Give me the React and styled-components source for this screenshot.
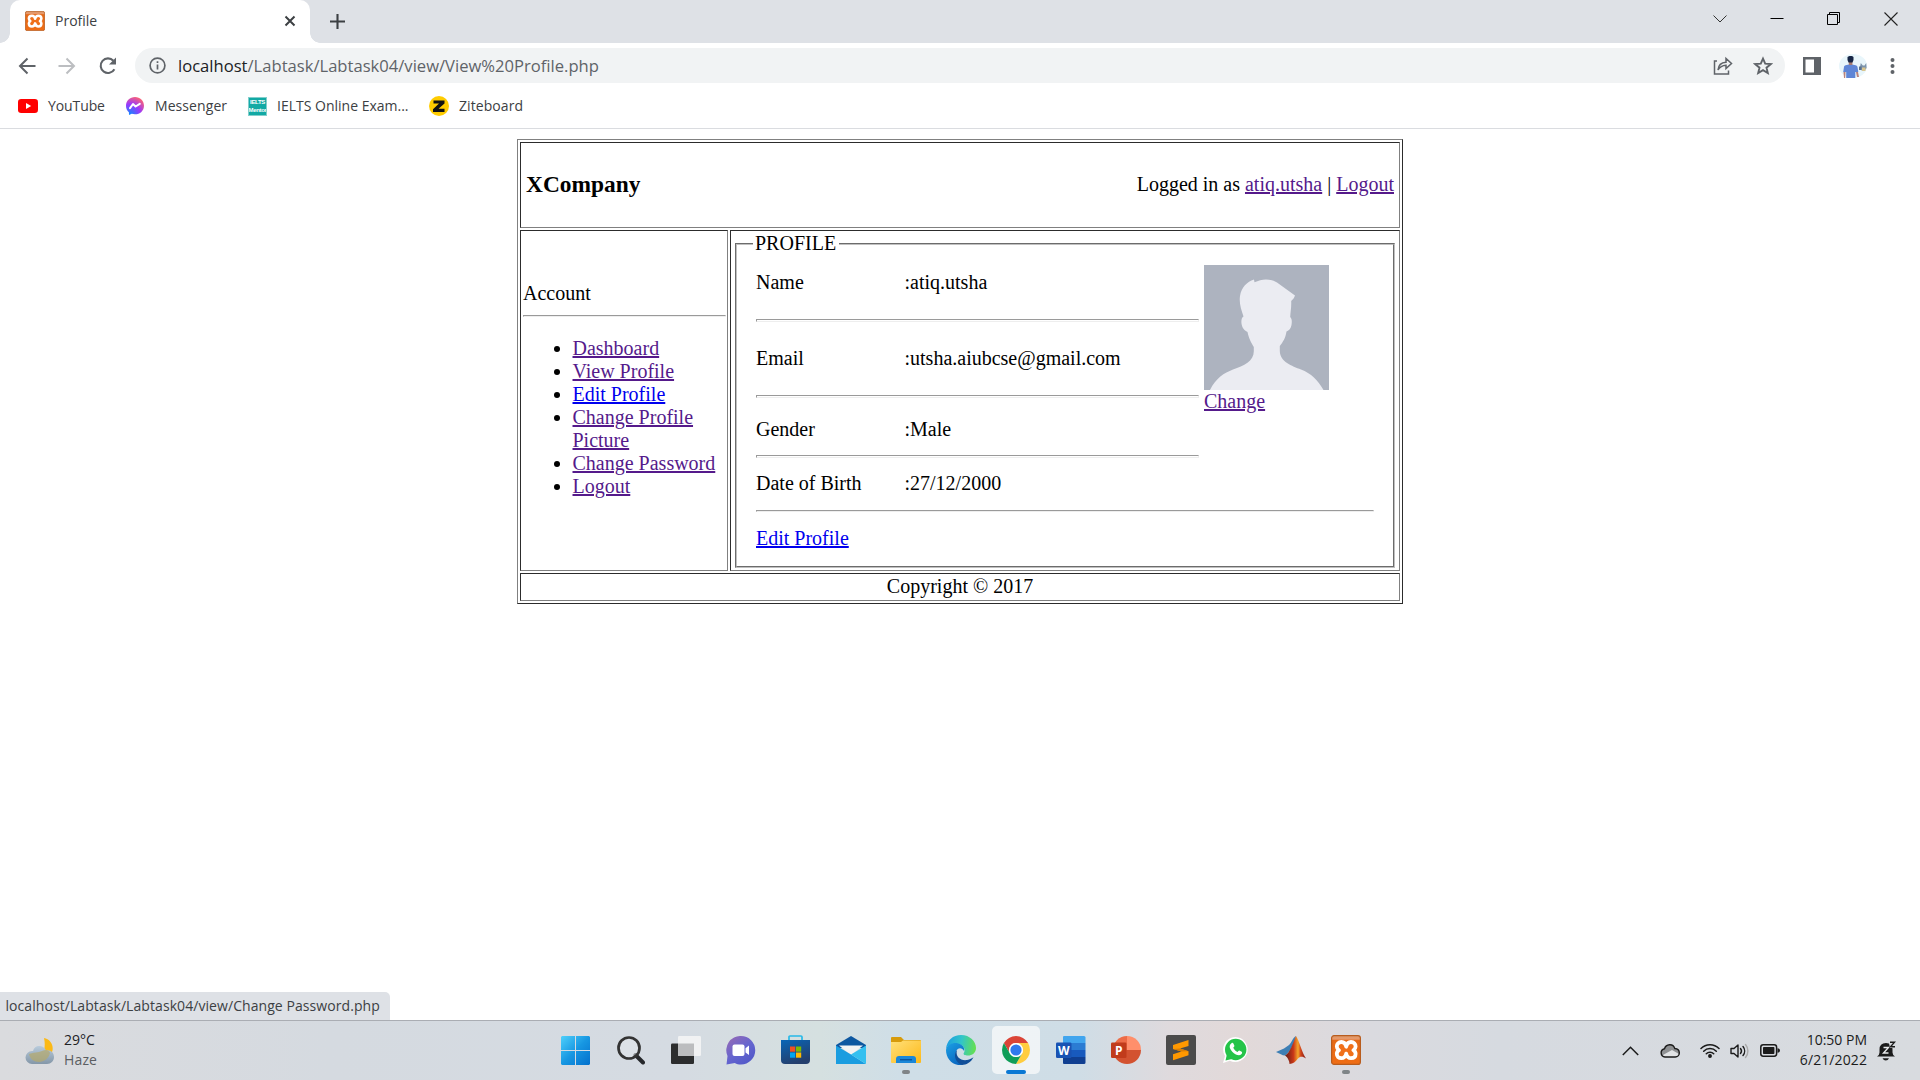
import React from "react";
import styled, { createGlobalStyle } from "styled-components";

const Global = createGlobalStyle`
  html, body { margin: 0; padding: 0; background: #fff; }
  body { overflow: hidden; }
  * { box-sizing: border-box; }
  svg { display: block; flex: none; }
`;

const ui = `"Open Sans", "Noto Sans", sans-serif`;

const Screen = styled.div`
  width: 1920px;
  height: 1080px;
  display: flex;
  flex-direction: column;
  background: #fff;
`;

/* ---------- browser chrome ---------- */
const TabStrip = styled.header`
  height: 43px;
  flex: none;
  display: flex;
  align-items: flex-end;
  background: #dee1e6;
`;
const TabFoot = styled.span`
  width: 10px;
  height: 10px;
  background: radial-gradient(circle at ${(p) => (p.$right ? "100% 0" : "0 0")}, #dee1e6 9.5px, #fff 10px);
`;
const Tab = styled.div`
  width: 300px;
  height: 43px;
  padding: 0 14px 2px 15px;
  display: flex;
  align-items: center;
  background: #fff;
  border-radius: 10px 10px 0 0;
`;
const Label = styled.span`
  font: ${(p) => p.$size || 14}px/1.2 ${ui};
  letter-spacing: ${(p) => p.$track || 0}px;
  color: ${(p) => p.$color || "#3c4043"};
  white-space: pre;
`;
const TabTitle = styled(Label)`
  flex: 1;
  padding: 1px 0 0 10px;
`;
const NewTab = styled.div`
  height: 43px;
  padding-left: 10px;
  flex: 1;
  display: flex;
  align-items: center;
`;
const WindowControls = styled.div`
  height: 37px;
  display: flex;
  align-items: center;
  align-self: flex-start;
  gap: 43px;
  padding-right: 22px;
`;
const Toolbar = styled.div`
  height: 45px;
  flex: none;
  display: flex;
  align-items: center;
  padding: 0 21px 0 18px;
`;
const NavButtons = styled.div`
  display: flex;
  align-items: center;
  gap: 22px;
  width: 117px;
`;
const UrlBar = styled.div`
  width: 1650px;
  height: 35px;
  border-radius: 18px;
  background: #f1f3f4;
  display: flex;
  align-items: center;
  padding: 0 12px 0 14px;
`;
const Url = styled(Label)`
  flex: 1;
  padding-left: 12px;
  b { font-weight: 400; color: #202124; }
`;
const UrlActions = styled.div`
  display: flex;
  gap: 20px;
`;
const ToolbarActions = styled.div`
  flex: 1;
  display: flex;
  align-items: center;
  justify-content: space-between;
  padding-left: 18px;
`;
const Bookmarks = styled.nav`
  height: 41px;
  flex: none;
  display: flex;
  align-items: center;
  padding: 0 0 4px 18px;
  border-bottom: 1px solid #dadce0;
`;
const Bookmark = styled.div`
  width: ${(p) => p.$width}px;
  display: flex;
  align-items: center;
  gap: ${(p) => p.$gap || 10}px;
`;

/* ---------- web page ---------- */
const dark = "#2c2c2c";
const grey = "#808080";

const Page = styled.main`
  flex: 1;
  padding-top: 10px;
  display: flex;
  flex-direction: column;
  align-items: center;
  font: 20px/23px "Liberation Serif", "Times New Roman", serif;
  color: #000;
`;
const Frame = styled.div`
  width: 886px;
  height: 465px;
  padding: 2px;
  display: grid;
  grid-template-columns: 208px 670px;
  grid-template-rows: 86px 341px 28px;
  gap: 2px;
  border: 1px solid;
  border-color: ${grey} ${dark} ${dark} ${grey};
`;
const Cell = styled.section`
  border: 1px solid;
  border-color: ${dark} ${grey} ${grey} ${dark};
`;
const HeaderCell = styled(Cell)`
  grid-column: 1 / -1;
  display: flex;
  align-items: center;
  justify-content: space-between;
  padding: 0 5px 2px 5px;
`;
const Company = styled.h3`
  margin: 0;
  font-size: 23.4px;
  line-height: 27px;
`;
const Link = styled.a`
  color: ${(p) => (p.$fresh ? "#0000ee" : "#551a8b")};
  text-decoration: underline;
`;
const SideCell = styled(Cell)`
  padding: 51px 1px 0 2px;
`;
const Rule = styled.div`
  height: ${(p) => p.$height || 3}px;
  margin: ${(p) => p.$margin || "0"};
  border: 1px solid;
  border-color: #9a9a9a #eee #eee #9a9a9a;
`;
const Menu = styled.ul`
  margin: 0;
  padding: 0 0 0 49.5px;
`;
const ContentCell = styled(Cell)`
  padding: 1px 4px 0;
`;
const Fieldset = styled.fieldset`
  margin: 0;
  height: 336px;
  padding: 0 16px;
  border: 2px groove #c0c0c0;
`;
const Legend = styled.legend`
  padding: 0 3px 0 2px;
`;
const Details = styled.div`
  padding: 10px 3px 0;
`;
const TopPart = styled.div`
  display: flex;
  gap: 5px;
`;
const Fields = styled.div`
  width: 443px;
  padding-top: 6px;
`;
const Field = styled.div`
  display: grid;
  grid-template-columns: 148.5px 1fr;
`;
const Photo = styled.figure`
  margin: 0;
  width: 125px;
`;
const FooterCell = styled(Cell)`
  grid-column: 1 / -1;
  text-align: center;
  padding-top: 1px;
`;

/* ---------- status bubble and taskbar ---------- */
const Status = styled.div`
  width: 390px;
  height: 28px;
  flex: none;
  padding: 1px 0 0 5.500px;
  display: flex;
  align-items: center;
  background: #dee1e6;
  border-radius: 0 5px 0 0;
`;
const Taskbar = styled.footer`
  height: 60px;
  flex: none;
  display: grid;
  grid-template-columns: 548px 826px 1fr;
  border-top: 1px solid #aaadb3;
  background: linear-gradient(90deg, #dadbde 0, #d5dae0 330px, #d5dbe2 680px, #d5e0e0 820px, #cfdee7 900px, #cfdde6 1080px, #dfdadd 1170px, #e2d9d9 1240px, #dadadf 1370px, #d6dae0 1500px, #d8dbdf 100%);
`;
const Weather = styled.div`
  display: flex;
  align-items: center;
  gap: 9px;
  padding: 0 0 0 24px;
`;
const Stack = styled.div`
  display: flex;
  flex-direction: column;
  align-items: ${(p) => (p.$end ? "flex-end" : "flex-start")};
  gap: 3px;
  padding-bottom: 1px;
`;
const Apps = styled.div`
  display: flex;
`;
const AppButton = styled.div`
  width: 55px;
  height: 59px;
  display: grid;
  place-items: center;
  position: relative;
`;
const AppFace = styled.div`
  width: 48px;
  height: 48px;
  display: grid;
  place-items: center;
  border-radius: 5px;
  background: ${(p) => (p.$active ? "rgba(246,249,250,.8)" : "none")};
  margin-top: -1px;
`;
const Marker = styled.i`
  position: absolute;
  left: 50%;
  bottom: 6px;
  width: ${(p) => (p.$active ? 20 : 8)}px;
  height: 4px;
  border-radius: 2px;
  transform: translateX(-50%);
  background: ${(p) => (p.$active ? "#0a78d4" : "#7f8487")};
`;
const Tray = styled.div`
  display: flex;
  align-items: center;
  justify-content: flex-end;
  padding-right: 24px;
`;
const TrayIcon = styled.div`
  margin-right: ${(p) => p.$gap}px;
`;
const Clock = styled(Stack)`
  width: 87px;
  margin-right: 10px;
`;

const Xampp = ({ size }) => (
  <svg width={size} height={size} viewBox="0 0 30 30">
    <defs>
      <linearGradient id="xampp" x1="0" y1="0" x2="0" y2="1">
        <stop stopColor="#dc9a6b" /><stop offset=".12" stopColor="#e8986a" /><stop offset=".17" stopColor="#e56a17" /><stop offset="1" stopColor="#ef6d15" />
      </linearGradient>
    </defs>
    <rect x=".6" y=".6" width="28.800" height="28.800" rx="2.500" fill="url(#xampp)" stroke="#b85c1e" strokeWidth="1.200" />
    <path
      d="M15.200 11.700C14.500 8.500 12.800 7 10.400 7C7.500 7 5.800 9 5.800 11.400C5.800 13.200 6.700 14.300 8 15.200C6.700 16 5.800 17.200 5.800 18.800C5.800 21.500 7.600 23.200 10.400 23.200C12.800 23.200 14.500 21.500 15.200 18.600C15.900 21.500 17.600 23.200 20 23.200C22.900 23.200 24.600 21.500 24.600 18.800C24.600 17.200 23.700 16 22.400 15.200C23.700 14.300 24.600 13.200 24.600 11.400C24.600 9 22.900 7 20 7C17.600 7 15.900 8.500 15.200 11.700Z"
      fill="#f0701a" stroke="#fff" strokeWidth="3.800" strokeLinejoin="round"
    />
  </svg>
);

const Back = ({ flip, color }) => (
  <svg width="18" height="18" viewBox="0 0 18 18" fill="none" stroke={color} strokeWidth="2" transform={flip ? "scale(-1 1)" : undefined}>
    <path d="M17.500 9H2M9.500 1.500 2 9l7.500 7.500" />
  </svg>
);
const Reload = () => (
  <svg width="20" height="20" viewBox="0 0 20 20">
    <path d="M16.400 13.200A7.300 7.300 0 1 1 15.400 4.800" fill="none" stroke="#5f6368" strokeWidth="2.100" />
    <path d="M18 1.600V8.600H11z" fill="#5f6368" />
  </svg>
);

const YouTube = () => (
  <svg width="20" height="14" viewBox="0 0 20 14">
    <rect width="20" height="14" rx="3.200" fill="#f00" />
    <path d="M8 4v6l5.200-3z" fill="#fff" />
  </svg>
);
const Messenger = () => (
  <svg width="18" height="18" viewBox="0 0 18 18">
    <defs>
      <radialGradient id="msg" cx=".2" cy="1" r="1.1">
        <stop offset="0" stopColor="#0a8bff" />
        <stop offset=".55" stopColor="#9a38fc" />
        <stop offset="1" stopColor="#ff6470" />
      </radialGradient>
    </defs>
    <path d="M9 0C3.900 0 0 3.700 0 8.700c0 2.700 1.100 5 2.900 6.500L3 18l2.700-1.200c1 .3 2.100.5 3.300.5 5.100 0 9-3.700 9-8.600S14.100 0 9 0z" fill="url(#msg)" />
    <path d="M4 11.200 7 7l2.600 2.500L13.800 6.800" fill="none" stroke="#fff" strokeWidth="2" strokeLinejoin="round" strokeLinecap="round" />
  </svg>
);
const IeltsTile = styled.span`
  width: 19px;
  height: 19px;
  background: #12a9a4;
  border: 1px solid #83cfcc;
  color: #fff;
  font: bold 6px/8px "Liberation Sans", Arial, sans-serif;
  display: flex;
  flex-direction: column;
  align-items: center;
  overflow: hidden;
  letter-spacing: -0.35px;
`;
const Zite = () => (
  <svg width="20" height="20" viewBox="0 0 20 20">
    <circle cx="10" cy="10" r="10" fill="#fc0" />
    <path d="M4.500 4.500H15.500V7.500L9.500 12.800H15.500V16H4V13.200L10 7.600H4.500z" fill="#111" />
  </svg>
);

const Silhouette = () => (
  <svg width="125" height="125" viewBox="0 0 125 125">
    <rect width="125" height="125" fill="#adb3bf" />
    <path fill="#ebecf2" d="M6 125C12 113 20 108 29 104.500C40 101 50 96 49.800 86V82C47 77 45 74 43.500 67C38 64.500 37 59 37.500 55C37.800 53 38.500 52 39.500 51.500C37 44 35 38 36 31C37.500 22 43 17 50 14.500L50.500 17.300C58 13.500 66 13.300 73 17.500C79 21.500 85 26.500 91 30.500C90 33 89 34.500 87.200 36C87.500 42 86.500 47 86.200 52C88 53.500 88 57 87.500 60C87 63.500 85 65.500 82.500 66.500C81.500 73 79 77 75.800 81V86C76 97 88 101 97 104.500C107 108.500 114 115 119.500 125z" />
  </svg>
);

const Avatar = () => (
  <svg width="28" height="24" viewBox="0 0 28 24">
    <ellipse cx="14" cy="12" rx="14" ry="12" fill="#e9f6fb" />
    <path d="M5 13c0-1.500 2.500-2.500 6.500-2.500s7 1 7 2.500l.8 5h-3v6H7.200v-6H4.200z" fill="#5f86d6" />
    <path d="M4.500 18h2l-.3 6H5zM17 18h2l1 5h-2z" fill="#b9837c" />
    <path d="M9.800 7.500h3.600v3.500H9.800z" fill="#a67a70" />
    <path d="M8.500 3c1-1.500 5.500-1.500 6 0v3l-1 2.500h-4l-1-2.500z" fill="#162545" />
    <path d="M21 13l.8-4 2 2.500h1.800l1.600-2.500.4 5-2 2.500h-3z" fill="#7d93ab" />
    <path d="M20 12.500h2.500V16H20z" fill="#59708c" /><path d="M23 13.500h3.500V17H23z" fill="#d9c58d" />
  </svg>
);

const icons = {
  windows: (
    <svg width="29" height="29" viewBox="0 0 29 29">
      <defs><linearGradient id="win" x1="0" y1="0" x2="29" y2="29" gradientUnits="userSpaceOnUse"><stop stopColor="#4fd0fb" /><stop offset=".5" stopColor="#1797e2" /><stop offset="1" stopColor="#0370cc" /></linearGradient></defs>
      <path fill="url(#win)" d="M1 0h13v14H0V1zM15 0h13l1 1v13H15zM0 15h14v14H1l-1-1zM15 15h14v13l-1 1H15z" />
    </svg>
  ),
  search: (
    <svg width="28" height="29" viewBox="0 0 28 29">
      <path d="M18.500 19 26 26.500" stroke="#26282b" strokeWidth="4" strokeLinecap="round" />
      <circle cx="12" cy="12" r="10.500" fill="#e4e7ec" fillOpacity=".5" stroke="#333" strokeWidth="2.700" />
    </svg>
  ),
  tasks: (
    <svg width="30" height="28" viewBox="0 0 30 28">
      <rect y="7.500" width="23" height="20.500" rx="1.200" fill="#2c2d2e" />
      <rect x="7" width="23" height="20" rx="1.200" fill="#f1f2f3" />
      <path d="M7 7.500h16V20H8q-1 0-1-1z" fill="#bcbdbf" />
    </svg>
  ),
  chat: (
    <svg width="30" height="29" viewBox="0 0 30 29">
      <defs><linearGradient id="chat" x1=".1" y1=".1" x2=".8" y2="1"><stop stopColor="#9069b8" /><stop offset=".5" stopColor="#6565cf" /><stop offset="1" stopColor="#5058c8" /></linearGradient></defs>
      <path fill="url(#chat)" d="M15 0a14 14 0 0 1 0 28.500c-2.500 0-4.300-.5-6.200-1.500L.5 28.500 1.500 20A14.200 14.200 0 0 1 15 0z" />
      <rect x="6.500" y="8.500" width="12" height="11.500" rx="2" fill="#fff" />
      <path d="M19.500 12.300 23 9.500v9.500L19.500 16.500z" fill="#fff" />
    </svg>
  ),
  store: (
    <svg width="29" height="30" viewBox="0 0 29 30">
      <defs><linearGradient id="store" x1="0" y1="0" x2=".4" y2="1"><stop stopColor="#0866b8" /><stop offset="1" stopColor="#243f6d" /></linearGradient></defs>
      <path d="M8 6V2q0-1 1-1h11q1 0 1 1v4" fill="none" stroke="#27b9e8" strokeWidth="1.700" />
      <path fill="url(#store)" d="M0 5h29v20q0 4-4 4H4q-4 0-4-4z" />
      <path fill="#f25022" d="M9 11.500h5.200v5.200H9z" /><path fill="#7fba00" d="M15 11.500h5.200v5.200H15z" />
      <path fill="#00a4ef" d="M9 17.500h5.200v5.200H9z" /><path fill="#ffb900" d="M15 17.500h5.200v5.200H15z" />
    </svg>
  ),
  mail: (
    <svg width="30" height="28" viewBox="0 0 30 28">
      <path fill="#0d57a0" d="M0 9 15 0l15 9v3H0z" />
      <path fill="#f3f3f3" d="M3 9.500h24L15 19z" />
      <path fill="#1a9de0" d="M0 9.500 15 18.500 30 28H0z" />
      <path fill="#35c0f0" d="M30 9.500V28L15 18.500z" />
    </svg>
  ),
  explorer: (
    <svg width="30" height="28" viewBox="0 0 30 28">
      <defs><linearGradient id="fold" x1="0" y1="0" x2="1" y2="1"><stop stopColor="#ffe07a" /><stop offset="1" stopColor="#fdb918" /></linearGradient></defs>
      <path fill="#d79b0c" d="M0 2q0-1 1-1h9l3 3h16q1 0 1 1v6H0z" />
      <path fill="url(#fold)" d="M0 6h10l2-1.500h18V26q0 1-1 1H1q-1 0-1-1z" />
      <path fill="#1a87d8" d="M5 27v-4q0-3 3-3h14q3 0 3 3v4z" />
      <rect x="9" y="23" width="12" height="1.400" fill="#0a549e" />
    </svg>
  ),
  edge: (
    <svg width="30" height="30" viewBox="0 0 30 30">
      <defs>
        <linearGradient id="e1" x1="0" y1=".4" x2="1" y2=".5"><stop stopColor="#1b9de2" /><stop offset=".5" stopColor="#32c5c9" /><stop offset="1" stopColor="#66e04f" /></linearGradient>
        <linearGradient id="e2" x1="0" y1="0" x2=".6" y2="1"><stop stopColor="#1ba0e4" /><stop offset="1" stopColor="#0a66c0" /></linearGradient>
      </defs>
      <path fill="url(#e1)" d="M0 14C1 5 7 0 15 0c9 0 15 6.500 15 13 0 5-4 7.500-8 7.500-3 0-5-1-4.300-2.300C20 15 18 10.500 13 9 7 7.200 2 10 0 14z" />
      <path fill="url(#e2)" d="M0 15C1 9.500 7 7 12.500 8.500 17 10 19 13 18 16c-2-4-7-3.500-8 1-1 5 2 10 7 13C7 31.500 0 24 0 15z" />
      <path fill="#104f99" d="M11 15c-2 7 4 11 10 10 3-.4 5-2 6.500-2.700C25 27.500 20 30 16 30c-6-2-9.500-10-5-15z" />
    </svg>
  ),
  chrome: (
    <svg width="28" height="28" viewBox="0 0 28 28">
      <path fill="#db4437" d="M1.900 7A14 14 0 0 1 26.100 7H14a7 7 0 0 0-6.100 10.500z" />
      <path fill="#ffcd40" d="M26.100 7A14 14 0 0 1 14 28l6.100-10.500A7 7 0 0 0 14 7z" />
      <path fill="#0f9d58" d="M1.900 7A14 14 0 0 0 14 28l6.100-10.500a7 7 0 0 1-12.200 0z" />
      <circle cx="14" cy="14" r="7" fill="#fff" /><circle cx="14" cy="14" r="5.600" fill="#3079ed" />
    </svg>
  ),
  sublime: (
    <svg width="30" height="30" viewBox="0 0 30 30">
      <rect width="30" height="30" rx="2" fill="#4b4b4b" />
      <path fill="#ff9800" d="M7 10 22.500 5v6L14 13.600l8.500 2.700v4L7 25.200v-6l8.500-2.700L7 14z" />
      <path fill="#d77d05" d="m7 14 8.500 2.500 7-.2L14 13.600z" />
    </svg>
  ),
  whatsapp: (
    <svg width="26" height="28" viewBox="1 0 26 28">
      <path d="M13.500 1A12.500 12.500 0 1 1 7.800 24.800L1 27l2-7A12.500 12.500 0 0 1 13.500 1z" fill="#fff" />
      <circle cx="13.700" cy="13.500" r="10.700" fill="#25c449" /><path d="M3.500 24.500 5 18l5 5z" fill="#25c449" />
      <path d="M9.500 7.200c.8-.7 1.500-.4 1.900.4l1 2.200c.2.600-.8 1.400-1.100 1.900.8 2 2.200 3.300 4.300 4.200.6-.4 1.100-1.600 1.700-1.400l2.400 1.200c.8.4.3 2-.4 2.600-1.400 1.400-3.500 1.100-5.500.1-2.700-1.300-4.800-3.600-5.800-6.100-.7-2-.2-3.800 1.500-5.100z" fill="#fff" />
    </svg>
  ),
  matlab: (
    <svg width="30" height="28" viewBox="0 0 30 28">
      <defs><linearGradient id="mat"><stop stopColor="#5f1c19" /><stop offset=".4" stopColor="#c93718" /><stop offset=".62" stopColor="#f5a52b" /><stop offset=".75" stopColor="#d2451b" /><stop offset="1" stopColor="#7c1615" /></linearGradient></defs>
      <path d="m0 16 8-3.500L13 9c2-1 4-8 7-9-1 7-6 16-11 19.500-3 0-5-2-9-3.500z" fill="#3d7fb5" />
      <path d="M20 0c3 4 6 17 10 22.500-3-2-6-2.500-8 0-2.500 3-5 5.500-8.500 5.500 0-3-2-7-4.500-8.500C14 17 17 7 20 0z" fill="url(#mat)" />
    </svg>
  ),
  xampp: <Xampp size={30} />,
};

const Brand = styled.svg`
  text { font: bold 12px "Open Sans", sans-serif; fill: #fff; text-anchor: middle; }
`;
icons.word = (
  <Brand width="30" height="28" viewBox="0 0 30 28">
    <path fill="#41a5ee" d="M8 0h20q1.500 0 1.500 1.500V7H7V1q0-1 1-1z" /><path fill="#2b7cd3" d="M7 7h22.500v7H7z" />
    <path fill="#185abd" d="M7 14h22.500v7H7z" /><path fill="#103f91" d="M7 21h22.500v5.500q0 1.500-1.500 1.500H8q-1 0-1-1z" />
    <rect y="6.500" width="15.500" height="15.500" rx="1.300" fill="#1953b3" />
    <text x="7.700" y="18.500">W</text>
  </Brand>
);
icons.powerpoint = (
  <Brand width="30" height="28" viewBox="0 0 30 28">
    <path fill="#ed6c47" d="M16 0v14H2A14 14 0 0 1 16 0z" /><path fill="#ff8f6b" d="M16 0a14 14 0 0 1 14 14H16z" />
    <path fill="#d35230" d="M2 14h28a14 14 0 0 1-28 0z" />
    <rect y="6.500" width="15.500" height="15.500" rx="1.300" fill="#c13b1b" />
    <text x="7.700" y="18.500">P</text>
  </Brand>
);

const apps = ["windows", "search", "tasks", "chat", "store", "mail", "explorer", "edge", "chrome", "word", "powerpoint", "sublime", "whatsapp", "matlab", "xampp"];
const running = ["explorer", "chrome", "xampp"];

const menu = [
  ["Dashboard"], ["View Profile"], ["Edit Profile", true], ["Change Profile Picture"], ["Change Password"], ["Logout"],
];

export default function App() {
  return (
    <Screen>
      <Global />
      <TabStrip>
        <TabFoot />
        <Tab>
          <Xampp size={20} />
          <TabTitle>Profile</TabTitle>
          <svg width="12" height="12" viewBox="0 0 12 12" stroke="#3c4043" strokeWidth="2"><path d="m1.500 1.500 9 9M10.500 1.500l-9 9" /></svg>
        </Tab>
        <TabFoot $right />
        <NewTab>
          <svg width="15" height="15" viewBox="0 0 15 15" stroke="#3c4043" strokeWidth="2.100"><path d="M7.500 0v15M0 7.500h15" /></svg>
        </NewTab>
        <WindowControls>
          <svg width="14" height="8" viewBox="0 0 14 8" fill="none" stroke="#333"><path d="m.5.5 6.500 6.500L13.500.5" /></svg>
          <svg width="14" height="14" viewBox="0 0 14 14" stroke="#000"><path d="M.5 6.500h13" /></svg>
          <svg width="14" height="14" viewBox="0 0 14 14" fill="none" stroke="#000"><path d="M.5 2.500h10v10H.5zM2.500 2.500v-2h10v10h-2" /></svg>
          <svg width="14" height="14" viewBox="0 0 14 14" stroke="#222" strokeWidth="1.100"><path d="m.5.5 13 13M13.500.5l-13 13" /></svg>
        </WindowControls>
      </TabStrip>
      <Toolbar>
        <NavButtons>
          <Back color="#5f6368" />
          <Back flip color="#bcbec1" />
          <Reload />
        </NavButtons>
        <UrlBar>
          <svg width="17" height="17" viewBox="0 0 17 17" fill="none" stroke="#5f6368" strokeWidth="1.700"><circle cx="8.500" cy="8.500" r="7.400" /><path d="M8.500 7.500v5M8.500 4.300v1.800" /></svg>
          <Url $size={16.6} $color="#5f6368"><b>localhost</b>/Labtask/Labtask04/view/View%20Profile.php</Url>
          <UrlActions>
            <svg width="20" height="20" viewBox="0 0 20 20" fill="none" stroke="#5f6368" strokeWidth="1.500"><path d="M4 5H1.500v13h14v-3.500" /><path d="M5 14c.4-5 3-7.500 8-7.800V2.500l5.500 5-5.500 5V9.200c-4 .2-6 1.300-8 4.800z" /></svg>
            <svg width="20" height="20" viewBox="0 0 20 20" fill="none" stroke="#5f6368" strokeWidth="1.900"><path d="m10 2.600 2.200 5 5.500.5-4.200 3.600 1.300 5.400-4.800-2.900-4.800 2.900 1.300-5.400-4.200-3.600 5.500-.5z" /></svg>
          </UrlActions>
        </UrlBar>
        <ToolbarActions>
          <svg width="18" height="18" viewBox="0 0 18 18"><path d="M0 0h18v18H0z" fill="#5f6368" /><path d="M2.500 2.500H11v13H2.500z" fill="#fff" /></svg>
          <Avatar />
          <svg width="14" height="18" viewBox="0 0 14 18" fill="#5f6368"><circle cx="7.500" cy="3" r="2" /><circle cx="7.500" cy="9" r="2" /><circle cx="7.500" cy="15" r="2" /></svg>
        </ToolbarActions>
      </Toolbar>
      <Bookmarks>
        <Bookmark $width={108}><YouTube /><Label $track={-0.1}>YouTube</Label></Bookmark>
        <Bookmark $width={122} $gap={11}><Messenger /><Label $track={0.08}>Messenger</Label></Bookmark>
        <Bookmark $width={181}><IeltsTile><span>IELTS</span><span>Mentor</span></IeltsTile><Label>IELTS Online Exam...</Label></Bookmark>
        <Bookmark $width={120}><Zite /><Label $track={0.08}>Ziteboard</Label></Bookmark>
      </Bookmarks>

      <Page>
        <Frame>
          <HeaderCell>
            <Company>XCompany</Company>
            <span>Logged in as <Link>atiq.utsha</Link> | <Link>Logout</Link></span>
          </HeaderCell>
          <SideCell>
            Account
            <Rule $height={2} $margin="10px 0 20px" />
            <Menu>
              {menu.map(([name, fresh]) => (
                <li key={name}><Link $fresh={fresh}>{name}</Link></li>
              ))}
            </Menu>
          </SideCell>
          <ContentCell>
            <Fieldset>
              <Legend>PROFILE</Legend>
              <Details>
                <TopPart>
                  <Fields>
                    <Field><span>Name</span><span>:atiq.utsha</span></Field>
                    <Rule $margin="25px 0" />
                    <Field><span>Email</span><span>:utsha.aiubcse@gmail.com</span></Field>
                    <Rule $margin="25px 0 20px" />
                    <Field><span>Gender</span><span>:Male</span></Field>
                    <Rule $margin="14px 0" />
                    <Field><span>Date of Birth</span><span>:27/12/2000</span></Field>
                  </Fields>
                  <Photo>
                    <Silhouette />
                    <Link>Change</Link>
                  </Photo>
                </TopPart>
                <Rule $height={2} $margin="15px 0" />
                <Link $fresh>Edit Profile</Link>
              </Details>
            </Fieldset>
          </ContentCell>
          <FooterCell>Copyright © 2017</FooterCell>
        </Frame>
      </Page>

      <Status><Label $track={0.07}>localhost/Labtask/Labtask04/view/Change Password.php</Label></Status>
      <Taskbar>
        <Weather>
          <svg width="31" height="28" viewBox="0 0 31 28">
            <defs><linearGradient id="cl" x1="0" y1="0" x2="0" y2="1"><stop stopColor="#b8cbdc" /><stop offset="1" stopColor="#8497a8" /></linearGradient></defs>
            <path d="M20 1c5 1 9 5 8.700 11-.4 7-8 11-14.700 8 6-3 8-10 6-19z" fill="#fbb917" />
            <path d="M8 27a6.500 6.500 0 0 1 0-13h1c1-4 4-5.500 7-5 3 .4 5 2 6 4.500 5-1 8 2.500 8 6.500s-3 7-7 7z" fill="url(#cl)" />
            <path d="M5 17c5-2 9-1 13-3 4-2 7-1 8 2-1 5-6 9-11 9s-9-3-10-8z" fill="#b3a972" opacity=".75" />
          </svg>
          <Stack>
            <Label $color="#202124">29°C</Label>
            <Label $color="#5b5e62" $track={0.15}>Haze</Label>
          </Stack>
        </Weather>
        <Apps>
          {apps.map((name) => (
            <AppButton key={name}>
              <AppFace $active={name === "chrome"}>{icons[name]}</AppFace>
              {running.includes(name) && <Marker $active={name === "chrome"} />}
            </AppButton>
          ))}
        </Apps>
        <Tray>
          <TrayIcon $gap={21}><svg width="17" height="10" viewBox="0 0 17 10" fill="none" stroke="#1b1b1b" strokeWidth="1.500"><path d="m.8 9 7.700-7.700L16.200 9" /></svg></TrayIcon>
          <TrayIcon $gap={20}>
            <svg width="20" height="15" viewBox="0 0 20 15">
              <path d="M5 14a4.200 4.200 0 0 1-.5-8.300C6 1 13 0 14.800 5.500 18 5.600 19.300 8 19.300 10c0 2.300-1.800 4-4 4z" fill="#8f9193" />
              <path d="M2 12.500 12 7l7 4c-.5 2-2 3-4 3H5z" fill="#e2e4e6" />
              <path d="M5 14a4.200 4.200 0 0 1-.5-8.300C6 1 13 0 14.800 5.500 18 5.600 19.300 8 19.300 10c0 2.300-1.800 4-4 4z" fill="none" stroke="#1b1b1b" strokeWidth="1.400" />
            </svg>
          </TrayIcon>
          <TrayIcon $gap={10}>
            <svg width="20" height="15" viewBox="0 0 20 15" fill="none" stroke="#1b1b1b" strokeWidth="1.500" strokeLinecap="round">
              <path d="M1 5.500a12.500 12.500 0 0 1 18 0M3.700 8.200a8.700 8.700 0 0 1 12.600 0M6.300 10.800a5 5 0 0 1 7.400 0" /><circle cx="10" cy="13" r="1.200" fill="#1b1b1b" />
            </svg>
          </TrayIcon>
          <TrayIcon $gap={10}>
            <svg width="20" height="16" viewBox="0 0 20 16" fill="none" stroke="#1b1b1b" strokeWidth="1.400" strokeLinecap="round">
              <path d="M1 5.500h3L8 2v12l-4-3.500H1z" strokeLinejoin="round" /><path d="M10.500 5.500a4 4 0 0 1 0 5M13 3.500a7 7 0 0 1 0 9" /><path d="M15.500 1.500a10 10 0 0 1 0 13" stroke="#aaa" />
            </svg>
          </TrayIcon>
          <TrayIcon $gap={0}>
            <svg width="20" height="13" viewBox="0 0 20 13"><rect x=".8" y=".8" width="15.800" height="11.400" rx="2.400" fill="none" stroke="#1b1b1b" strokeWidth="1.500" /><rect x="3" y="3" width="11.400" height="7" rx=".8" fill="#1b1b1b" /><path d="M17.500 4.200q2.500 0 2.500 2.300t-2.500 2.300z" fill="#1b1b1b" /></svg>
          </TrayIcon>
          <Clock $end>
            <Label $color="#1b1b1b">10:50 PM</Label>
            <Label $color="#1b1b1b" $track={0.1}>6/21/2022</Label>
          </Clock>
          <svg width="19" height="20" viewBox="0 0 19 20">
            <path d="M0 15.500q2.500-1.500 2.500-4V8.500Q2.500 2 9 2t6.500 6.500v3q0 2.500 2.500 4zM5.500 17.200h6.500q-1 2.300-3.200 2.300t-3.300-2.300z" fill="#1b1b1b" />
            <path d="M6.500 6.500h5l-5 5.500h5" fill="none" stroke="#e8eaec" strokeWidth="1.400" />
            <path d="M11.500 0H19v7h-6z" fill="#d8dbdf" />
            <path d="M13 1.200h4.500l-4 4.600H18" fill="none" stroke="#1b1b1b" strokeWidth="1.400" />
          </svg>
        </Tray>
      </Taskbar>
    </Screen>
  );
}
